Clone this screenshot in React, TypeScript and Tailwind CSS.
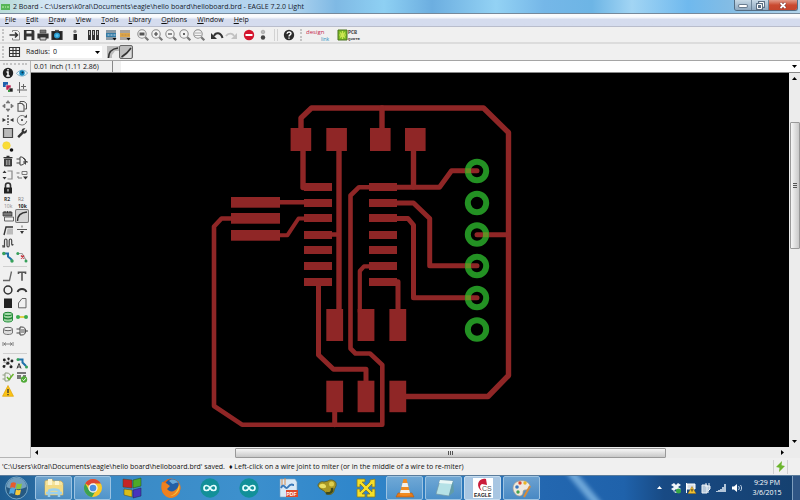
import type { ReactNode } from "react";

type Icon = { name: string; art: ReactNode; active?: boolean };

const ink = "#333";

const Glyph = ({ children, w = 14, h = 14 }: { children: ReactNode; w?: number; h?: number }) => (
	<svg width={w} height={h} viewBox={`0 0 ${w} ${h}`} fill="none" stroke={ink} strokeWidth="1.2" className="block shrink-0" aria-hidden="true">
		{children}
	</svg>
);

const magnifier = (inner: ReactNode) => (
	<>
		<circle cx="6" cy="6" r="4.200" fill="#f4f4f4" stroke="#8d8d8d" strokeWidth="1.100" />
		<path d="M9.300 9.300l3 3" stroke="#777" strokeWidth="2.200" />
		{inner}
	</>
);

const fileIcons: Icon[] = [
	{ name: "Open", art: <><path d="M4.500 4V2.500h5l2 2V12H4.500V10" strokeWidth="1" stroke="#888" /><path d="M1.500 7h8M7 4.500L9.500 7 7 9.500" strokeWidth="1.500" /></> },
	{ name: "Save", art: <><path d="M2.500 2.500h8.500l.8.8v8.200H2.500z" fill="#333" /><path d="M4.500 3h5v2.500h-5zM4.500 8.500h5V12h-5z" fill="#eee" stroke="none" /></> },
	{ name: "Print", art: <><path d="M4 2h6v3H4z" fill="#777" stroke="#444" strokeWidth=".6" /><path d="M2 6h10v4H2z" fill="#333" /><path d="M4 9h6v3H4z" fill="#ccc" strokeWidth=".8" /></> },
	{ name: "CAM", art: <><path d="M2 3.500h10v8H2z" fill="#222" /><path d="M5 2.500h4" stroke="#555" /><circle cx="7" cy="7.500" r="3" fill="#2b9bd0" stroke="none" /><circle cx="7" cy="7.500" r="1.500" fill="#55c3ee" stroke="none" /></> },
];

const switchIcon: Icon = { name: "Schematic", art: <><circle cx="7" cy="3.500" r="1.700" fill="#888" stroke="none" /><path d="M5.500 6h3.500v6H5.500z" fill="#222" stroke="none" /></> };
const libraryIcon: Icon = { name: "Use library", art: <><path d="M2 2h3v10H2zM6 2h3v10H6zM10 2h3v10h-3z" fill="#333" stroke="none" /><path d="M3.500 3v4M7.500 3v4M11.500 3v4" stroke="#bbb" strokeWidth="1" /></> };

const scriptIcons: Icon[] = [
	{ name: "Script", art: <><path d="M2 2h10v10H2z" fill="#8c9ba5" stroke="none" /><path d="M2 5h10v4H2z" fill="#347ca5" stroke="none" /><path d="M3.500 7h2M6.500 7h2M9.500 7h2" stroke="#cde" strokeWidth="1" /><path d="M8.500 10h4l-2 2.500z" fill="#111" stroke="none" /></> },
	{ name: "ULP", art: <><path d="M2 2h10v10H2z" fill="#a9a39b" stroke="none" /><path d="M2 5h10v4H2z" fill="#dda64a" stroke="none" /><path d="M3.500 7h2M6.500 7h2M9.500 7h2" stroke="#b98a4a" strokeWidth="1" /><path d="M8.500 10h4l-2 2.500z" fill="#111" stroke="none" /></> },
];

const zoomIcons: Icon[] = [
	{ name: "Fit", art: magnifier(<path d="M3.500 4.500h5v3h-5z" fill="#555" stroke="none" />) },
	{ name: "Zoom in", art: magnifier(<path d="M4 6h4M6 4v4" stroke="#444" />) },
	{ name: "Zoom out", art: magnifier(<path d="M4 6h4" stroke="#444" />) },
	{ name: "Redraw", art: magnifier(<circle cx="6" cy="6" r="1" fill="#333" stroke="none" />) },
	{ name: "Zoom select", art: magnifier(<path d="M3 5h6M3 7.500h6" stroke="#999" strokeWidth=".8" />) },
];

const undoIcons: Icon[] = [
	{ name: "Undo", art: <><path d="M4 8c1.500-4 7-4 8.500 2" strokeWidth="2" /><path d="M1 5v6h6z" fill="#333" stroke="none" /></> },
	{ name: "Redo", art: <><path d="M10 8C8.500 4.500 4 5 2 8" stroke="#c2c2c2" strokeWidth="1.800" /><path d="M13 5v6H7z" fill="#c2c2c2" stroke="none" /></> },
];

const stopIcons: Icon[] = [
	{ name: "Stop", art: <><circle cx="7" cy="7" r="5.200" fill="#d4142c" stroke="none" /><path d="M3.500 7h7" stroke="#fff" strokeWidth="2" /></> },
	{ name: "Go", art: <><circle cx="7" cy="4" r="1.800" fill="#bbb" stroke="#999" strokeWidth=".6" /><circle cx="7" cy="9.500" r="2.200" fill="#444" stroke="none" /></> },
];

const helpIcon: Icon = { name: "Help", art: <><circle cx="7" cy="7" r="5.200" fill="#2c2c2c" stroke="none" /><path d="M5 5.800c.2-2.500 4-2.300 4-.3 0 1.400-2 1.400-2 3M7 9.400v1.300" stroke="#fff" strokeWidth="1.400" /></> };

const viewTools: Icon[] = [
	{ name: "Info", art: <><circle cx="7" cy="7" r="5.200" fill="#222" stroke="none" /><path d="M7 3v1.600M5.500 6H7v4M5.300 10h3.500" stroke="#fff" strokeWidth="1.500" /></> },
	{ name: "Show", art: <><path d="M1.500 7.500C4 3.500 10 3 12.500 7 10 11 4.500 11 1.500 7.500z" fill="#e6f5fc" stroke="#79a9c1" strokeWidth=".9" /><circle cx="7" cy="7" r="2.700" fill="#1688bd" stroke="none" /><circle cx="7.500" cy="6.500" r="1" fill="#0b3046" stroke="none" /></> },
	{ name: "Display", art: <><path d="M2 2h5v5H2z" fill="#2162ad" stroke="none" /><path d="M5 5h5v5H5z" fill="#c11f50" stroke="#eee" strokeWidth=".6" /><path d="M8 8h4v4H8z" fill="#222" stroke="#eee" strokeWidth=".6" /><path d="M7 10h2v2H7z" fill="#3b9843" stroke="none" /></> },
	{ name: "Mark", art: <path d="M4.500 2v11M2 10h10M8.500 4v5M6 6.500h5" stroke="#666" strokeWidth="1" /> },
];

const editTools: Icon[] = [
	{ name: "Move", art: <path d="M7 1.500l2 2.500H5zM7 12.500L5 10h4zM1.500 7L4 5v4zM12.500 7L10 9V5z" fill="#777" stroke="#666" strokeWidth=".6" /> },
	{ name: "Copy", art: <><path d="M5 4V2.500h4l2.500 2v5.500H9.500" stroke="#555" strokeWidth="1" /><path d="M3 4.500h4L9 6.500v5.800H3z" stroke="#555" strokeWidth="1.100" /></> },
	{ name: "Mirror", art: <><path d="M7 2v10" strokeDasharray="2 1" /><path d="M1.500 5v4L5 7zM12.500 5v4L9 7z" fill="#333" stroke="none" /></> },
	{ name: "Rotate", art: <><path d="M11.300 5A4.800 4.800 0 1 0 11.800 8" stroke="#777" strokeWidth="1" /><circle cx="7" cy="7" r="1" fill="#333" stroke="none" /><path d="M9 4.500h3V1.500z" fill="#444" stroke="none" /></> },
	{ name: "Group", art: <path d="M2.500 2.500h9v9h-9z" fill="#b9b9b9" stroke="#444" strokeWidth="1.200" /> },
	{ name: "Change", art: <path d="M11.700 3.500L9.500 5.500 8.500 4.500 10.500 2.300C7.500 1.500 6 4 6.800 5.800L2.300 10.200 4 12 8.500 7.500C10.500 8.200 12.700 6 11.700 3.500z" fill="#333" stroke="none" /> },
	{ name: "Paint", art: <><circle cx="5.500" cy="5.500" r="3.800" fill="#f9dc35" stroke="#f0cf2a" strokeWidth=".5" /><circle cx="10.500" cy="10" r="1.800" fill="#111" stroke="none" /></> },
	{ name: "", art: null },
	{ name: "Delete", art: <><path d="M3.500 5h7v7h-7z" fill="#444" strokeWidth=".9" /><path d="M2.500 3.700h9M5.500 2.300h3" /><path d="M5.500 6v5M7 6v5M8.500 6v5" stroke="#bbb" strokeWidth=".7" /></> },
	{ name: "Add", art: <path d="M5 3v8h2l3-2V5L7 3zM1.500 5h3.500M1.500 9h3.500M8 4l4 4M8 8h5M10.500 5.500v5" stroke="#444" strokeWidth="1" /> },
	{ name: "Pinswap", art: <><path d="M6.500 3H11v8H6.500" stroke="#888" /><path d="M3.500 2.500l2 2.500h-4zM3.500 11.500l2-2.500h-4z" fill="#333" stroke="none" /></> },
	{ name: "Replace", art: <><path d="M1.500 5h3M7 3.500h5v3H7zM3 8v2h4" stroke="#777" strokeWidth="1" /><path d="M8 8.500h5l-2.500 3z" fill="#333" stroke="none" /></> },
	{ name: "Lock", art: <><path d="M4.500 7V4.500c0-3.300 5-3.300 5 0V7" strokeWidth="1.600" /><path d="M3 6.500h8v6H3z" fill="#222" stroke="none" /><path d="M7 8v2.500" stroke="#ddd" /></> },
	{ name: "", art: null },
	{ name: "Name", art: <><text x="3" y="6" fontSize="5" fontWeight="700" fill="#333" stroke="none">R2</text><text x="3" y="13" fontSize="5" fill="#888" stroke="none">10k</text></> },
	{ name: "Value", art: <><text x="3" y="6" fontSize="5" fill="#777" stroke="none">R2</text><text x="3" y="13" fontSize="5" fontWeight="700" fill="#222" stroke="none">10k</text></> },
	{ name: "Smash", art: <><path d="M2 3h9v4H2z" fill="#777" strokeWidth=".7" /><path d="M3.500 8h9v4h-9z" fill="#eee" stroke="#555" strokeWidth=".9" /><path d="M4 2v2M6.500 2v2M9 2v2" stroke="#333" strokeWidth=".9" /></> },
	{ name: "Miter", active: true, art: <path d="M2.500 12C2.500 6.500 5.500 3.500 12 3" strokeWidth="1.500" /> },
	{ name: "Split", art: <><path d="M5.500 11.500l1-6H12v6z" fill="#bbb" stroke="none" /><path d="M3 12L5 4h7" strokeWidth="1.400" /></> },
	{ name: "Optimize", art: <><path d="M2 6.500h10" stroke="#555" strokeWidth="1" /><path d="M7 2.500v2" stroke="#777" /><path d="M5 8h4l-2 3z" fill="#333" stroke="none" /></> },
	{ name: "Meander", art: <path d="M2 9v2h1.500V4.500c0-2 2.500-2 2.500 0v5c0 2 2.200 2 2.200 0v-5c0-2 2.500-2 2.500 0V8c0 1.500 1.300 1.500 1.300 0" stroke="#444" strokeWidth="1.200" /> },
	{ name: "", art: null },
	{ name: "Route", art: <><path d="M3.500 3.500H7v3l3.500 3v1" stroke="#1e71a9" strokeWidth="2" /><circle cx="2.800" cy="3.500" r="1.700" fill="#36a05a" stroke="none" /><circle cx="11" cy="11" r="1.700" fill="#36a05a" stroke="none" /></> },
	{ name: "Ripup", art: <><path d="M3.500 3.500H7L11 10" stroke="#999" strokeWidth="1.200" /><path d="M6 5.500l3 3M9 5.500l-3 3" stroke="#c8323c" strokeWidth="1.400" /><circle cx="2.800" cy="3.500" r="1.500" fill="#36a05a" stroke="none" /><circle cx="11" cy="11" r="1.500" fill="#36a05a" stroke="none" /></> },
];

const drawTools: Icon[] = [
	{ name: "Wire", art: <path d="M2 11.500h6.500L10.500 2.500" stroke="#666" strokeWidth="1.300" /> },
	{ name: "Text", art: <path d="M3.500 5V3.200h7V5M7 3.200v8.500" stroke="#555" strokeWidth="1.600" /> },
	{ name: "Circle", art: <circle cx="7" cy="7" r="3.900" strokeWidth="1.500" /> },
	{ name: "Arc", art: <path d="M2.500 9C4 5 10 5 11.500 9" strokeWidth="1.800" /> },
	{ name: "Rect", art: <path d="M3 2.500h8v9.500H3z" fill="#222" stroke="none" /> },
	{ name: "Polygon", art: <path d="M3.500 7L7 2.500h4v9.300H3.500z" stroke="#666" strokeWidth="1" /> },
	{ name: "Via", art: <><path d="M2.500 4v6.500c1 2 8 2 9 0V4" fill="#9bd29f" stroke="#25913e" strokeWidth="1" /><ellipse cx="7" cy="4" rx="4.500" ry="1.700" fill="#9fdca6" stroke="#218436" strokeWidth="1" /><path d="M2.500 7.300c1 2 8 2 9 0" stroke="#218436" strokeWidth="1.300" /></> },
	{ name: "Signal", art: <><path d="M3 7h8" stroke="#d8ca29" strokeWidth="1.700" /><circle cx="3" cy="7" r="2" fill="#3bab4f" stroke="none" /><circle cx="11" cy="7" r="2" fill="#3bab4f" stroke="none" /></> },
	{ name: "Hole", art: <><path d="M2.500 5v4c1 2 8 2 9 0V5" fill="#ddd" stroke="#777" strokeWidth="1" /><ellipse cx="7" cy="5" rx="4.500" ry="1.700" fill="#eee" stroke="#666" strokeWidth="1" /></> },
	{ name: "Attribute", art: <><path d="M5 3v8h2c5 0 5-8 0-8zM1.500 5h3.500M1.500 9h3.500M10 7h3" stroke="#444" strokeWidth="1" /><path d="M6 6h5M6 8h5" stroke="#555" strokeWidth="1" /></> },
	{ name: "Dimension", art: <path d="M2 5v4M12 5v4M3 7h8M5 5.500L3 7l2 1.500M9 5.500L11 7 9 8.500" stroke="#777" strokeWidth=".9" /> },
	{ name: "", art: null },
];

const checkTools: Icon[] = [
	{ name: "Ratsnest", art: <><path d="M3 3l8 7M3 10.500L11 4M2.500 6.500L7 7l1-4" stroke="#888" strokeWidth=".7" /><g fill="#222" stroke="none"><circle cx="3.300" cy="4" r="1.400" /><circle cx="7.500" cy="2.800" r="1.200" /><circle cx="11" cy="5" r="1.400" /><circle cx="6.800" cy="7.200" r="1.500" /><circle cx="3" cy="10.500" r="1.400" /><circle cx="10" cy="10.800" r="1.500" /></g></> },
	{ name: "Auto", art: <><path d="M4 3.500h3.500v3L11 10" stroke="#1e71a9" strokeWidth="2" /><circle cx="3" cy="3.500" r="1.500" fill="#36a05a" stroke="none" /><circle cx="11.500" cy="11" r="1.500" fill="#36a05a" stroke="none" /><path d="M2 12.500l2-5 2 5M2.700 11h2.600" stroke="#333" strokeWidth="1" /></> },
	{ name: "ERC", art: <><path d="M4 3v8h2c5 0 5-8 0-8zM1.500 5H4M1.500 9H4" stroke="#8a9a7a" strokeWidth="1" /><path d="M6 7l2 2.500L12.500 4" stroke="#69b52c" strokeWidth="1.500" /></> },
	{ name: "DRC", art: <><path d="M2 2h9v2H2zM2 5h4v4H2zM8 5h3v2H8z" fill="#777" stroke="none" /><circle cx="9" cy="9.500" r="3.200" fill="#51ab38" stroke="none" /><path d="M7.500 9.500l1.200 1.200 2-2.400" stroke="#fff" strokeWidth="1" /></> },
	{ name: "Errors", art: <><path d="M7 1.500l5.500 10.800h-11z" fill="#fbc314" stroke="#dfa50c" strokeWidth=".7" /><path d="M7 5v4M7 10v1.300" stroke="#333" strokeWidth="1.300" /></> },
];

const ToolButtons = ({ icons }: { icons: Icon[] }) => (
	<div className="flex">
		{icons.map((icon) => (
			<button key={icon.name} aria-label={icon.name} className="block">
				<Glyph>{icon.art}</Glyph>
			</button>
		))}
	</div>
);

const Grip = () => <div className="h-3 w-0 border-l-2 border-dotted border-[#c4c4c4]" />;

const menus = ["File", "Edit", "Draw", "View", "Tools", "Library", "Options", "Window", "Help"];

const TitleBar = () => (
	<header className="flex h-[14px] shrink-0 justify-between border-b border-[#76899b] bg-[linear-gradient(90deg,#b9dcd8_0%,#d3e5f4_6%,#b4d3ee_27%,#b3d6f0_36%,#7fb9e4_42%,#8ed0f3_48%,#6caee0_54%,#93d2f4_62%,#75b7e8_68%,#6db5e5_74%,#a2d5f4_79%,#6fb9ee_86%,#82bce5_91%,#b3d5ec_100%)] pl-px">
		<div className="flex items-center gap-[3px]">
			<svg width="9" height="8" viewBox="0 0 9 8" aria-hidden="true">
				<path d="M0 1h9v6H0z" fill="#56b558" />
				<path d="M1 3h2v2H1zM4 3h1v2H4zM6 3h2v2H6z" fill="#8dd784" />
			</svg>
			<h1 className="text-[7px] leading-3 whitespace-nowrap text-[#15202c]">
				2 Board - C:\Users\k0ral\Documents\eagle\hello board\helloboard.brd - EAGLE 7.2.0 Light
			</h1>
		</div>
		<div className="mr-[2px] flex h-[11px] overflow-hidden rounded-b-[3px] border border-t-0 border-[#536d84]">
			<button aria-label="Minimize" className="flex w-[17px] items-end justify-center border-r border-[#6c8499] bg-linear-to-b from-[#c7d9e6] to-[#8fa9c0] pb-[3px]">
				<span className="h-[2px] w-2 rounded-[1px] bg-white ring-[1px] ring-[#6a7d90]" />
			</button>
			<button aria-label="Restore" className="flex w-[17px] items-center justify-center border-r border-[#6c8499] bg-linear-to-b from-[#c7d9e6] to-[#8fa9c0]">
				<svg width="9" height="9" viewBox="0 0 9 9" fill="none" aria-hidden="true">
					<path d="M2 0h7v7H7v2H0V2h2z" fill="#5c7084" />
					<path d="M3.500 2V1.500h4v4H7M1.500 3.500h4v4h-4z" stroke="#fff" />
				</svg>
			</button>
			<button aria-label="Close" className="flex w-[28px] items-center justify-center bg-linear-to-b from-[#e09a88] via-[#ca4a30] to-[#c4452c]">
				<svg width="8" height="7" viewBox="0 0 8 7" aria-hidden="true">
					<path d="M1.500 1l5 5M6.500 1l-5 5" stroke="#6d2b26" strokeWidth="3" />
					<path d="M1.500 1l5 5M6.500 1l-5 5" stroke="#fff" strokeWidth="1.800" />
				</svg>
			</button>
		</div>
	</header>
);

const MenuBar = () => (
	<nav className="flex h-[13px] shrink-0 items-center gap-[10px] border-b border-[#b9bdcc] bg-linear-to-b from-[#fafbfd] from-25% to-[#d5dcee] to-45% pl-[5px]">
		{menus.map((menu) => (
			<button key={menu} className="text-[7px] leading-3">
				<span className="underline">{menu[0]}</span>
				{menu.slice(1)}
			</button>
		))}
	</nav>
);

const Toolbar = () => (
	<div className="flex h-[17px] shrink-0 items-center gap-1 border-b-2 border-[#dcdcdc] pl-[2px]">
		<Grip />
		<ToolButtons icons={fileIcons} />
		<ToolButtons icons={[switchIcon]} />
		<ToolButtons icons={[libraryIcon]} />
		<ToolButtons icons={scriptIcons} />
		<ToolButtons icons={zoomIcons} />
		<ToolButtons icons={undoIcons} />
		<ToolButtons icons={stopIcons} />
		<div className="h-3 w-1 border-x border-[#d2d2d2]" />
		<ToolButtons icons={[helpIcon]} />
		<Grip />
		<button aria-label="design link">
			<svg width="27" height="14" viewBox="0 0 27 14" className="block">
				<text x="0" y="6" fontSize="6" fill="#c4284f">design</text>
				<text x="15" y="13" fontSize="5" fill="#2b8fc0">link</text>
			</svg>
		</button>
		<button aria-label="PCB quote">
			<svg width="24" height="14" viewBox="0 0 24 14" className="block">
				<path d="M1 2h9v10H1z" fill="#7dba25" stroke="#4b7323" />
				<path d="M5.500 3v8M2 7h7M3 4.500l5 5M8 4.500l-5 5" stroke="#cbe651" strokeWidth="1.200" />
				<text x="11" y="6" fontSize="5" fontFamily="Liberation Mono, monospace" fontWeight="700" fill="#444">PCB</text>
				<text x="11" y="12" fontSize="4" fontFamily="Liberation Mono, monospace" fontWeight="700" fill="#444">QUOTE</text>
			</svg>
		</button>
	</div>
);

const ParameterBar = () => (
	<div className="flex h-[17px] shrink-0 items-center border-b border-[#a5a5a5] pl-[2px]">
		<Grip />
		<button aria-label="Grid" className="ml-1">
			<Glyph>
				<path d="M1.500 2.500h10v9h-10zM5 2.500v9M8 2.500v9M1.500 5.500h10M1.500 8.500h10" strokeWidth="1.100" />
			</Glyph>
		</button>
		<label htmlFor="radius" className="ml-1 w-6 text-[7px] leading-3">Radius:</label>
		<div className="relative">
			<select id="radius" defaultValue="0" className="block h-3 w-[52px] appearance-none bg-white pl-[3px] text-[7px] leading-3">
				<option>0</option>
			</select>
			<svg width="5" height="3" viewBox="0 0 5 3" className="pointer-events-none absolute top-[5px] right-[2px]" aria-hidden="true">
				<path d="M0 0h5L2.500 3z" />
			</svg>
		</div>
		<button aria-label="Round miter" className="ml-[5px] bg-[#bdbdbd]">
			<Glyph w={12} h={12}>
				<path d="M5 12V9l3-4h4v7z" fill="#eee" stroke="none" />
				<path d="M1.500 12C1.500 6 4 3 11 2" strokeWidth="1.500" />
			</Glyph>
		</button>
		<button aria-label="Straight miter" className="rounded-[2px] border border-[#666] bg-[#bdbdbd]">
			<Glyph w={12} h={12}>
				<path d="M3 12l8-8v8z" fill="#ddd" stroke="none" />
				<path d="M1.500 11C4 9.500 9 5 11 2" strokeWidth="1.500" />
			</Glyph>
		</button>
	</div>
);

const Palette = ({ icons, className }: { icons: Icon[]; className: string }) => (
	<div className={`grid auto-rows-fr grid-cols-2 ${className}`}>
		{icons.map((icon, i) =>
			icon.art ? (
				<button
					key={i}
					aria-label={icon.name}
					className={icon.active ? "flex items-center rounded-[2px] bg-[#d5d5d5] ring-1 ring-[#777] ring-inset" : "flex items-center"}
				>
					<Glyph>{icon.art}</Glyph>
				</button>
			) : (
				<span key={i} />
			),
		)}
	</div>
);

const Sidebar = () => (
	<aside className="flex w-[31px] shrink-0 flex-col gap-px border-r border-b border-[#b5b5b5] px-px pt-[2px]">
		<div className="mx-[2px] h-[2px] border-t-2 border-dotted border-[#c4c4c4]" />
		<Palette icons={viewTools} className="h-[28px]" />
		<hr className="mx-[2px] my-px border-[#cfcfcf]" />
		<Palette icons={editTools} className="h-[165px]" />
		<hr className="mx-[2px] my-px border-[#cfcfcf]" />
		<Palette icons={drawTools} className="h-[82px]" />
		<hr className="mx-[2px] my-px border-[#cfcfcf]" />
		<Palette icons={checkTools} className="h-[42px]" />
	</aside>
);

const pinRows = [183, 199, 214, 231, 246, 262, 278];
const viaRows = [171, 203, 234.500, 266, 298, 329.500];

const Board = () => (
	<svg viewBox="31 73 758 374" preserveAspectRatio="xMinYMin meet" className="h-full w-full bg-black" role="img" aria-label="Board layout">
		<g fill="none" stroke="#8f2626" strokeWidth="5" strokeLinecap="round" strokeLinejoin="round">
			<path d="M301 130V118L311.500 108H483.500L508.500 132.500V375.500L488 396.500H404" strokeWidth="5.400" />
			<path d="M382 108V130M413.500 150V187M303 150V187.500H310M339 150V312" strokeWidth="5.400" />
			<path d="M332 234.500H338M280 202.300H306" strokeWidth="4.400" />
			<path d="M278 235.200H287.500L298.500 218.500H306" strokeWidth="4" />
			<path d="M233 218.500H221.500L214 226.500V406L242 424.700H382.300V365L370 353.500H355.500L350.500 348.500V195.500L359 187.200H370" strokeWidth="4.600" />
			<path d="M371 266.300H364L359.800 271V312" strokeWidth="4.200" />
			<path d="M318.500 284V355L333.500 369.300H366V383M334.700 410V424.700M380 281.700H398V312" />
			<path d="M395 187.300H439.500L451.500 170.800H477" />
			<path d="M395 203H413.500L429.700 218.500V265.800H477" />
			<path d="M395 218.500H408L413.500 225V297.800H477" />
			<path d="M477 234.700H508" />
		</g>
		<g fill="#8f2626">
			{[290.600, 326.300, 370, 405].map((x) => (
				<rect key={x} x={x} y="128" width="20.600" height="23" />
			))}
			{[197, 213, 230].map((y) => (
				<rect key={y} x="231" y={y} width="49" height="10.700" />
			))}
			{pinRows.map((y) => (
				<g key={y}>
					<rect x="304" y={y} width="28" height="8" />
					<rect x="369" y={y} width="28" height="8" />
				</g>
			))}
			{[326.300, 357.600, 389.400].map((x) => (
				<g key={x}>
					<rect x={x} y="309" width="16.800" height="32" />
					<rect x={x} y="380.700" width="16.800" height="31.500" />
				</g>
			))}
		</g>
		<g fill="none" stroke="#239123" strokeWidth="6">
			{viaRows.map((y) => (
				<circle key={y} cx="477" cy={y} r="9.200" />
			))}
		</g>
		<path d="M465.500 170.800H471M465.500 265.800H471M465.500 297.800H471M483 234.700H488.500" stroke="#668c24" strokeWidth="5" />
	</svg>
);

const Workspace = () => (
	<main className="flex min-h-0 min-w-0 flex-1 flex-col">
		<div className="flex h-3 shrink-0 border-b border-[#888]">
			<output className="w-[82px] border-r border-[#888] pl-[3px] text-[7px] leading-[11px] whitespace-nowrap">0.01 inch (1.11 2.86)</output>
			<div className="w-2" />
			<input aria-label="Command" className="min-w-0 flex-1 bg-white text-[7px] outline-none" />
			<button aria-label="Command history" className="flex w-[11px] items-center justify-center bg-white">
				<svg width="5" height="3" viewBox="0 0 5 3"><path d="M0 0h5L2.500 3z" /></svg>
			</button>
		</div>
		<div className="flex min-h-0 flex-1">
			<div className="min-h-0 min-w-0 flex-1">
				<Board />
			</div>
			<div className="flex w-[11px] flex-col items-center bg-[#ececec]">
				<svg width="5" height="3" viewBox="0 0 5 3" className="my-1"><path d="M0 3h5L2.500 0z" /></svg>
				<div className="h-[38px]" />
				<div className="flex h-[127px] w-[10px] flex-col items-center justify-center gap-px rounded-[1px] border border-[#999] bg-linear-to-r from-[#f6f6f6] to-[#c9c9c9]">
					<i className="h-px w-1 bg-[#555]" />
					<i className="h-px w-1 bg-[#555]" />
					<i className="h-px w-1 bg-[#555]" />
				</div>
				<svg width="5" height="3" viewBox="0 0 5 3" className="mt-auto mb-1"><path d="M0 0h5L2.500 3z" /></svg>
			</div>
		</div>
		<div className="flex h-[11px] shrink-0 items-center bg-[#ececec] pr-4 pl-1">
			<svg width="3" height="5" viewBox="0 0 3 5"><path d="M3 0v5L0 2.500z" /></svg>
			<div className="w-[197px]" />
			<div className="flex h-[10px] w-[431px] items-center justify-center gap-px rounded-[1px] border border-[#999] bg-linear-to-b from-[#f6f6f6] to-[#c9c9c9]">
				<i className="h-1 w-px bg-[#555]" />
				<i className="h-1 w-px bg-[#555]" />
				<i className="h-1 w-px bg-[#555]" />
			</div>
			<svg width="3" height="5" viewBox="0 0 3 5" className="ml-auto"><path d="M0 0v5l3-2.500z" /></svg>
		</div>
	</main>
);

const StatusBar = () => (
	<div className="flex h-[17px] shrink-0 items-center justify-between pr-3 pl-[2px]">
		<p className="flex gap-1 text-[7px] leading-3 whitespace-nowrap">
			<span>'C:\Users\k0ral\Documents\eagle\hello board\helloboard.brd' saved.</span>
			<span>♦ Left-click on a wire joint to miter (or in the middle of a wire to re-miter)</span>
		</p>
		<div className="flex h-[14px] w-[15px] items-center justify-center border-x border-[#d0d0d0]">
			<svg width="9" height="11" viewBox="0 0 9 11" aria-hidden="true"><path d="M6 0L0 6l3.500.8L3 11l6-6-3.500-.8z" fill="#6cb52d" /></svg>
		</div>
	</div>
);

const arduino = (
	<>
		<circle cx="12" cy="12" r="9.700" fill="#129099" stroke="none" />
		<path d="M12 12c-2-3.600-6-3-6 0s4 3.600 6 0 6-3 6 0-4 3.600-6 0z" stroke="#e8ffff" strokeWidth="1.700" />
	</>
);

type App = { name: string; open?: boolean; focused?: boolean; art: ReactNode };

const apps: App[] = [
	{ name: "Explorer", open: true, art: <><path d="M3 5l7-2 1 2h8l2 2v12H3z" fill="#f5e49e" stroke="#caa956" strokeWidth=".7" /><path d="M6 3h4v6H6zM13 5h4v5h-4z" fill="#fff6cf" stroke="none" /><path d="M3 9h18v8H3z" fill="#f3da83" stroke="none" /><path d="M7 21v-6c0-2 10-2 10 0v6M4 17h16" stroke="#9ad0ed" strokeWidth="2.500" /></> },
	{ name: "Chrome", open: true, art: <><circle cx="12" cy="12" r="9" fill="#f7ca2b" stroke="none" /><path d="M12 12L4.200 7.500A9 9 0 0 1 19.800 7.500H12z" fill="#dd4634" stroke="none" /><path d="M4.200 7.500A9 9 0 0 0 11 21l4-7H8z" fill="#3ba251" stroke="none" /><circle cx="12" cy="12" r="4" fill="#4b8ee0" stroke="#f5f5f5" strokeWidth="1.300" /></> },
	{ name: "Blocks", art: <><path d="M3 3l9 1v8l-9-1z" fill="#c82424" stroke="#442" strokeWidth=".5" /><path d="M13 4l8-2v8l-8 2z" fill="#4daa28" stroke="#242" strokeWidth=".5" /><path d="M4 13l8 1v7l-8-2z" fill="#d8bd18" stroke="#442" strokeWidth=".5" /><path d="M13 14l8-2v8l-8 2z" fill="#4734bd" stroke="#224" strokeWidth=".5" /></> },
	{ name: "Firefox", art: <><circle cx="12" cy="12" r="9.500" fill="#e56a16" stroke="none" /><circle cx="13" cy="10" r="7" fill="#235fa6" stroke="none" /><path d="M10 5c3-3 8-1 9 2-3-1-4 1-5 1s-2-2-4-3z" fill="#69a9d9" stroke="none" /><path d="M3 6l4 1 4 3-3 3c3 4 8 3 11-2l2-3c2 8-3 14-10 14C4 21 1 13 3 6z" fill="#ee8120" stroke="none" /><path d="M20 8c2 6-3 12-9 12 6-2 8-6 9-12z" fill="#f7c53b" stroke="none" /></> },
	{ name: "Arduino", art: arduino },
	{ name: "Arduino 2", art: arduino },
	{ name: "PDF", art: <><path d="M4 3h15l2 3v15H4z" fill="#d8e9f6" stroke="#7ba0bd" strokeWidth=".6" /><path d="M5 12c3-7 4 3 7-1s4-2 6-2" stroke="#3a79b9" strokeWidth="2" /><path d="M6 3v6M9 2v7" stroke="#d68b4d" /><path d="M10 14h12v7H10z" fill="#dc4a2c" stroke="none" /><text x="10.500" y="20" fontSize="5" fontWeight="700" fontFamily="Liberation Sans, sans-serif" fill="#fff" stroke="none">PDF</text></> },
	{ name: "Fritz", art: <><path d="M3 9c1-3 4-4 6-3l4-1c2-2 7-1 8 2 1 4-2 5-2 8-1 4-7 5-9 1-1-2-7-3-7-7z" fill="#a99825" stroke="#5d5a1c" strokeWidth=".8" /><path d="M4 10c1-3 6-3 7 0s-6 3-7 0z" fill="#eadf64" stroke="none" /><path d="M11 17c4 1 7-1 6-5" stroke="#3e4a1c" strokeWidth="2.500" /><circle cx="16.500" cy="8" r="2.500" fill="#ddce4d" stroke="none" /></> },
	{ name: "Arrows", art: <path d="M3 3h8v3H8l4 4 4-4V4l5-1v8h-3V8l-4 4 4 4v-3h3v8h-8v-3h3l-4-4-4 4h3v3H3v-8h3v3l4-4-4-4v3H3z" fill="#f7df28" stroke="#857b24" strokeWidth=".8" /> },
	{ name: "VLC", open: true, art: <><path d="M5 17h14l2 4H3z" fill="#e77a18" stroke="#b45c13" strokeWidth=".6" /><path d="M10.500 3h3l4 16c-3 1-8 1-11 0z" fill="#f08b22" stroke="none" /><path d="M9.500 7h5l1 4h-7zM7.800 14h8.400l.8 3H7z" fill="#f2f0ec" stroke="none" /></> },
	{ name: "Notepad", open: true, art: <><path d="M8 4l13 1-4 15-13-2z" fill="#b5e1e6" stroke="#7396a5" strokeWidth=".7" /><path d="M8 4l13 1-1 3L7 7z" fill="#eaf7f7" stroke="none" /><path d="M17 20l4-15 1 11z" fill="#619ca8" stroke="none" /></> },
	{ name: "Eagle", focused: true, open: true, art: <><path d="M2 2h20v20H2z" fill="#fff" stroke="none" /><path d="M15 3C7 1 4 11 11 15c-3-4-2-6 0-7l5 1z" fill="#ca1d3b" stroke="none" /><text x="11" y="15" fontSize="7" fontFamily="Liberation Sans, sans-serif" fill="#555" stroke="none">CS</text><text x="3" y="21" fontSize="5" fontWeight="700" fontFamily="Liberation Sans, sans-serif" fill="#222" stroke="none">EAGLE</text></> },
	{ name: "Paint", open: true, art: <><path d="M3 12c0-7 9-9 14-6 6 4 2 8-2 8-3 0-1 3-3 5-3 3-9-1-9-7z" fill="#eee9df" stroke="#a99b87" strokeWidth=".7" /><circle cx="7" cy="11" r="1.800" fill="#3976c1" stroke="none" /><circle cx="10" cy="7" r="1.700" fill="#dc4630" stroke="none" /><circle cx="15" cy="7" r="1.700" fill="#e7b727" stroke="none" /><circle cx="8" cy="16" r="1.700" fill="#43a44c" stroke="none" /><path d="M20 10l-6 11" stroke="#d98b36" strokeWidth="2" /></> },
];

const Taskbar = () => (
	<footer className="relative flex h-[25px] shrink-0 items-center overflow-hidden border-t border-[#5a7c9c] bg-[linear-gradient(90deg,#1d5c91_0%,#27699f_4%,#3a8ac5_14%,#3d90cd_30%,#2f86cb_45%,#2e76b7_60%,#2367b0_68%,#1f62ab_78%,#184a84_83%,#15406f_100%)]">
		<div className="absolute left-[580px] h-12 w-2 -rotate-40 bg-[#8fc3ec] opacity-70 blur-[2px]" />
		<button aria-label="Start" className="ml-1 w-[31px]">
			<svg width="25" height="24" viewBox="0 0 25 24" className="block">
				<circle cx="12.500" cy="12" r="11" fill="#255982" stroke="#8cbad6" strokeWidth=".8" />
				<path d="M2.500 11a10 9.500 0 0 1 20 0c-6 3-14 3-20 0z" fill="#719fbf" />
				<path d="M7 7c2-1 3-1 5 0l-1 5c-2-1-3-1-5 0z" fill="#e85b2c" />
				<path d="M13 7.500c2 1 3 1 5 0l-1 5c-2 1-3 1-5 0z" fill="#8ac73d" />
				<path d="M6 13c2-1 3-1 5 0l-1 5c-2-1-3-1-5 0z" fill="#4fa8e3" />
				<path d="M12 13.500c2 1 3 1 5 0l-1 5c-2 1-3 1-5 0z" fill="#f8c93a" />
			</svg>
		</button>
		<div className="flex gap-[2px]">
			{apps.map((app) => (
				<button
					key={app.name}
					aria-label={app.name}
					className={
						app.focused
							? "flex w-[37px] justify-center rounded-[2px] border border-[#c5dcef] bg-[#a8c6e2]"
							: app.open
								? "flex w-[37px] justify-center rounded-[2px] border border-[#9cc3e2] bg-linear-to-b from-[#8bb9dd]/70 to-[#5f9dd0]/60"
								: "flex w-[37px] justify-center border border-transparent"
					}
				>
					<svg width="22" height="22" viewBox="1 1 22 22" fill="none" className="block">{app.art}</svg>
				</button>
			))}
		</div>
		<div className="ml-auto flex items-center text-white">
			<svg width="86" height="14" viewBox="0 0 86 14" fill="none" aria-hidden="true">
				<path d="M1 8h5L3.500 5z" fill="#fff" />
				<path d="M15 4l3-2 2 2 2-2 3 2-3 2 3 2-3 2-2-2-2 2-3-2 3-2zM17 10.500l3 1.500 3-1.500" fill="#f0f5f8" />
				<circle cx="22.500" cy="10" r="2.500" fill="#36a844" />
				<path d="M30.500 2v10M31 3h8v5h-8z" stroke="#fff" fill="#d7dfe7" />
				<path d="M36 5.500l4 7h-8z" fill="#f2c230" stroke="#996c12" strokeWidth=".5" />
				<path d="M36 8v2.500" stroke="#222" />
				<path d="M46 4h5v8h-5zM50 2v3M53 2v3M49 5h5v3l-2 2v2" stroke="#eef3f7" fill="#b7c9da" />
				<path d="M61 11v-1M63 11V9M65 11V8M67 11V6M69 11V3" stroke="#e9f1f8" strokeWidth="1.500" />
				<path d="M76 5.500h2L81 3v8l-3-2.500h-2z" fill="#fff" />
				<path d="M82.500 5c1 1.500 1 2.500 0 4M84.500 4c1.500 2 1.500 4 0 6" stroke="#d6e5f3" strokeWidth=".9" />
			</svg>
			<time className="ml-1 w-[42px] text-center text-[7px] leading-[10px] whitespace-nowrap">
				9:29 PM
				<br />
				3/6/2015
			</time>
			<button aria-label="Show desktop" className="ml-1 h-6 w-2 border-l border-[#7e9dbd] bg-[#2f5585]" />
		</div>
	</footer>
);

export default function App() {
	return (
		<div className="flex h-screen flex-col overflow-hidden bg-[#f0f0f0] font-['Open_Sans',sans-serif] text-[#111]">
			<TitleBar />
			<MenuBar />
			<Toolbar />
			<ParameterBar />
			<div className="flex min-h-0 flex-1">
				<Sidebar />
				<Workspace />
			</div>
			<StatusBar />
			<Taskbar />
		</div>
	);
}
